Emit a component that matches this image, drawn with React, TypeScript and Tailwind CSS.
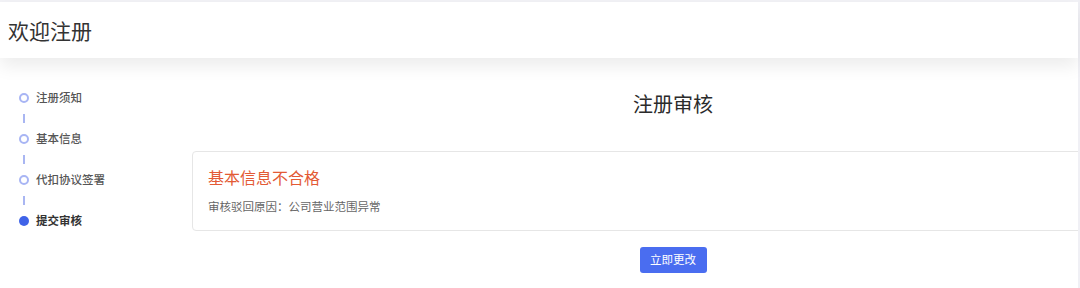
const steps = [
  { label: "注册须知", done: true },
  { label: "基本信息", done: true },
  { label: "代扣协议签署", done: true },
  { label: "提交审核", done: false },
];

function StepDot({ active }: { active: boolean }) {
  if (active) {
    return <span className="h-[10px] w-[10px] shrink-0 rounded-full bg-[#3f63e8]" />;
  }
  return <span className="h-[10px] w-[10px] shrink-0 rounded-full border-2 border-[#a8b5f4] bg-white" />;
}

export default function App() {
  return (
    <div
      className="flex h-[288px] w-[1080px] overflow-hidden bg-white text-[#333]"
      style={{ fontFamily: '"Noto Sans CJK SC", "Noto Sans", sans-serif' }}
    >
      <div className="flex min-w-0 flex-1 flex-col">
        <div className="h-[2px] bg-[#f2f2f6]" />
        <header className="relative z-10 flex h-[56px] items-center bg-white px-[8px] shadow-[0_8px_18px_rgba(0,0,0,0.08)]">
          <h1 className="text-[21px] leading-none text-[#333]">欢迎注册</h1>
        </header>
        <div className="flex flex-1">
          <aside className="w-[192px] shrink-0 pl-[19px] pt-[32px]">
            {steps.map((s, i) => (
              <div key={s.label}>
                <div className="flex h-[16px] items-center gap-[7px]">
                  <StepDot active={!s.done} />
                  <span
                    className={
                      s.done
                        ? "text-[11.5px] font-medium text-[#555]"
                        : "text-[11.5px] font-bold text-[#333]"
                    }
                  >
                    {s.label}
                  </span>
                </div>
                {i < steps.length - 1 && (
                  <div className="flex h-[25px] w-[10px] items-center justify-center">
                    <span className="h-[9px] w-[1.5px] bg-[#a9b6f2]" />
                  </div>
                )}
              </div>
            ))}
          </aside>
          <main className="flex w-[962px] shrink-0 flex-col items-center pt-[32px]">
            <h2 className="h-[28px] text-[20px] leading-[28px] text-[#2b2b2b]">注册审核</h2>
            <div className="mt-[33px] h-[80px] w-full rounded-[4px] border border-[#e6e6e6] bg-white px-[15px] pt-[13px]">
              <p className="text-[16px] leading-[24px] text-[#e35a35]">基本信息不合格</p>
              <p className="mt-[9px] text-[11.5px] leading-[16px] text-[#666]">
                审核驳回原因：公司营业范围异常
              </p>
            </div>
            <button className="mt-[16px] h-[26px] w-[67px] rounded-[3px] bg-[#4a6df0] text-[11.5px] text-white">
              立即更改
            </button>
          </main>
        </div>
      </div>
      <div className="w-[2px] shrink-0 bg-[#f0f0f5]" />
    </div>
  );
}
